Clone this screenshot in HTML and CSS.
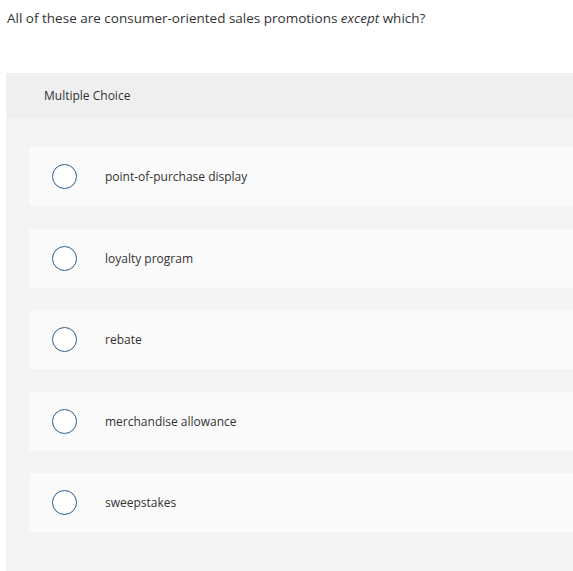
FILE: index.html
```html
<!DOCTYPE html>
<html>
<head>
<meta charset="utf-8">
<link rel="stylesheet" href="styles.css">
</head>
<body>
<div class="page">
  <p class="question">All of these are consumer-oriented sales promotions <em>except</em> which?</p>
  <div class="panel">
    <div class="panel-header">Multiple Choice</div>
    <div class="panel-body">
      <label class="option"><span class="radio"></span><span class="label">point-of-purchase display</span></label>
      <label class="option"><span class="radio"></span><span class="label">loyalty program</span></label>
      <label class="option"><span class="radio"></span><span class="label">rebate</span></label>
      <label class="option"><span class="radio"></span><span class="label">merchandise allowance</span></label>
      <label class="option"><span class="radio"></span><span class="label">sweepstakes</span></label>
    </div>
  </div>
</div>
</body>
</html>
```
FILE: styles.css
```css
html, body {
  margin: 0;
  padding: 0;
  background: #ffffff;
  overflow: hidden;
}
.page {
  padding: 9px 0 0 6px;
  font-family: "Open Sans", "Liberation Sans", sans-serif;
  color: #333333;
}
.question {
  margin: 0 0 0 1px;
  font-size: 13.5px;
  line-height: 18px;
  height: 64px;
}
.question em {
  font-style: italic;
}
.panel {
  background: #f4f4f4;
  height: 498px;
}
.panel-header {
  background: #efefef;
  height: 45px;
  display: flex;
  align-items: center;
  padding-left: 38px;
  font-size: 12px;
  color: #333333;
}
.panel-body {
  display: flex;
  flex-direction: column;
  gap: 22.5px;
  padding: 29px 0 0 23px;
}
.option {
  display: flex;
  align-items: center;
  height: 59px;
  background: #fafafa;
  border-radius: 3px 0 0 3px;
}
.radio {
  box-sizing: border-box;
  width: 25px;
  height: 25px;
  border: 1.5px solid #2c5c8c;
  border-radius: 50%;
  background: #ffffff;
  margin-left: 23px;
  margin-right: 28px;
  flex: none;
}
.label {
  font-size: 12px;
  color: #333333;
}
```
